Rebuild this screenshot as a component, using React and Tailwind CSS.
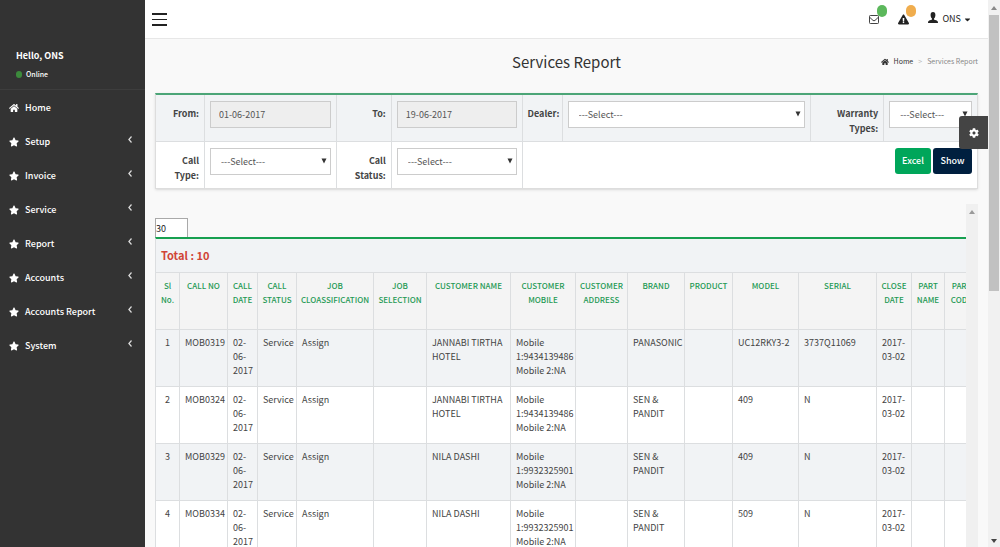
import React from "react";
import { FaHome, FaStar, FaCog, FaExclamationTriangle, FaCaretDown } from "react-icons/fa";

const MENU = ["Setup", "Invoice", "Service", "Report", "Accounts", "Accounts Report", "System"];

const COLUMNS = [
  { label: "Sl No.", width: "w-[24px]" },
  { label: "CALL NO", width: "w-[48px]" },
  { label: "CALL DATE", width: "w-[30px]" },
  { label: "CALL STATUS", width: "w-[39px]" },
  { label: "JOB CLOASSIFICATION", width: "w-[77px]" },
  { label: "JOB SELECTION", width: "w-[53px]" },
  { label: "CUSTOMER NAME", width: "w-[84px]" },
  { label: "CUSTOMER MOBILE", width: "w-[65px]" },
  { label: "CUSTOMER ADDRESS", width: "w-[52px]" },
  { label: "BRAND", width: "w-[57px]" },
  { label: "PRODUCT", width: "w-[48px]" },
  { label: "MODEL", width: "w-[66px]" },
  { label: "SERIAL", width: "w-[78px]" },
  { label: "CLOSE DATE", width: "w-[35px]" },
  { label: "PART NAME", width: "w-[33px]" },
  { label: "PART CODE", width: "w-[34px]" },
];

const ROWS = [
  { no: "MOB0319", name: "JANNABI TIRTHA HOTEL", mobile: "9434139486", brand: "PANASONIC", model: "UC12RKY3-2", serial: "3737Q11069" },
  { no: "MOB0324", name: "JANNABI TIRTHA HOTEL", mobile: "9434139486", brand: "SEN & PANDIT", model: "409", serial: "N" },
  { no: "MOB0329", name: "NILA DASHI", mobile: "9932325901", brand: "SEN & PANDIT", model: "409", serial: "N" },
  { no: "MOB0334", name: "NILA DASHI", mobile: "9932325901", brand: "SEN & PANDIT", model: "509", serial: "N" },
];

function Sidebar() {
  return (
    <aside className="w-[145px] shrink-0 bg-[#333333] text-white">
      <div className="h-[90px] border-b border-[#3d3d3d] pl-4 pt-[48px]">
        <p className="text-[9px] font-bold leading-4">Hello, ONS</p>
        <p className="mt-[2px] flex items-center gap-1 text-[7px] font-medium leading-4">
          <span className="h-[7px] w-[6px] rounded-full bg-[#3c8a3c]" />
          Online
        </p>
      </div>
      <nav className="pt-px">
        <a href="#home" className="flex h-[34px] items-center gap-[6px] pl-[9px] text-[9px] font-medium">
          <FaHome className="size-[10px]" />
          Home
        </a>
        {MENU.map((item) => (
          <a key={item} href="#menu" className="flex h-[34px] items-center gap-[6px] pl-[9px] pr-[13px] text-[9px] font-medium">
            <FaStar className="size-[10px]" />
            <span className="flex-1">{item}</span>
            <svg viewBox="0 0 4 7" className="mb-[5px] h-[7px] w-[4px]" fill="none" stroke="#ddd" strokeWidth="1.2">
              <path d="M3.500 0.500L0.900 3.500l2.600 3" />
            </svg>
          </a>
        ))}
      </nav>
    </aside>
  );
}

function Header() {
  return (
    <header className="flex h-[39px] shrink-0 items-center justify-between border-b border-[#e7e7e7] bg-white pl-[7px] pr-[16px]">
      <button type="button" aria-label="Toggle menu" className="flex w-[15px] flex-col gap-[4px]">
        <span className="h-[2px] bg-[#222]" />
        <span className="h-px bg-[#222]" />
        <span className="h-[2px] bg-[#222]" />
      </button>
      <div className="flex items-center text-[#222]">
        <button type="button" aria-label="Messages" className="relative mr-[19px]">
          <svg viewBox="0 0 10 9" className="h-[9px] w-[10px]" fill="none" stroke="#444" strokeWidth="1">
            <rect x="0.5" y="0.5" width="9" height="8" rx="0.8" />
            <path d="M0.8 2.4 L4 5.4 Q5 6.2 6 5.4 L9.2 2.4" />
          </svg>
          <span className="absolute -top-[10px] left-[8px] h-[12px] w-[10px] rounded-full bg-[#5cb85c]" />
        </button>
        <button type="button" aria-label="Alerts" className="relative mr-[19px]">
          <FaExclamationTriangle className="size-[11px]" />
          <span className="absolute -top-[9px] left-[8px] h-[12px] w-[10px] rounded-full bg-[#f0ad4e]" />
        </button>
        <button type="button" className="flex items-center gap-1 text-[9px]">
          <svg viewBox="0 0 10 11" className="mb-1 h-[11px] w-[10px]" fill="#222">
            <path d="M5 0C3.300 0 2.600 1.300 2.600 3c0 1.400.5 2.900 1.400 3.600v.9C3 8.100.3 8.500.1 9.700L0 11h10l-.1-1.300C9.700 8.500 7 8.100 6 7.500v-.9C6.900 5.900 7.400 4.400 7.400 3 7.400 1.300 6.700 0 5 0z" />
          </svg>
          <span>ONS</span>
          <FaCaretDown className="-ml-[2px] size-[9px]" />
        </button>
      </div>
    </header>
  );
}

function Cell({ children, className = "" }) {
  return <div className={"border-r border-[#dcdee0] px-[5px] pt-[6px] " + className}>{children}</div>;
}

function Label({ htmlFor, children }) {
  return (
    <Cell className="text-right">
      <label htmlFor={htmlFor} className="block pt-[5px] text-[9px] font-bold leading-[15px] text-[#444]">
        {children}
      </label>
    </Cell>
  );
}

function DateField({ id, value }) {
  return (
    <Cell>
      <input id={id} readOnly defaultValue={value} className="block h-[27px] w-full border border-[#cccccc] bg-[#eeeeee] px-2 text-[9px] text-[#555] outline-none" />
    </Cell>
  );
}

function SelectField({ id, last = false }) {
  return (
    <Cell className={last ? "border-r-0" : ""}>
      <div className="relative">
        <select id={id} className="block h-[27px] w-full appearance-none rounded-none border border-[#cccccc] bg-white px-[10px] text-[9px] text-[#555] outline-none">
          <option>---Select---</option>
        </select>
        <svg viewBox="0 0 6 6" className="pointer-events-none absolute right-[4px] top-[10px] size-[6px]" fill="#333">
          <path d="M0.500 0.500h5L3 5.500z" />
        </svg>
      </div>
    </Cell>
  );
}

const GRID = "grid grid-cols-[49px_132fr_55px_131fr_40px_249fr_73px_93fr]";

function Filters() {
  return (
    <form className="border-x border-b border-t-2 border-[#dddddd] border-t-[#4ba577] bg-white shadow-sm" onSubmit={(e) => e.preventDefault()}>
      <div className={GRID + " h-[47px] border-b border-[#dcdee0] bg-[#f1f3f5]"}>
        <Label htmlFor="from">From:</Label>
        <DateField id="from" value="01-06-2017" />
        <Label htmlFor="to">To:</Label>
        <DateField id="to" value="19-06-2017" />
        <Label htmlFor="dealer">Dealer:</Label>
        <SelectField id="dealer" />
        <Label htmlFor="warranty">Warranty Types:</Label>
        <SelectField id="warranty" last />
      </div>
      <div className={GRID + " h-[46px]"}>
        <Label htmlFor="type">Call Type:</Label>
        <SelectField id="type" />
        <Label htmlFor="status">Call Status:</Label>
        <SelectField id="status" />
        <div className="col-span-4 flex items-start justify-end gap-[2px] px-[5px] pt-[6px]">
          <button type="button" className="h-[26px] w-[36px] rounded-[3px] bg-[#00a65a] text-[9px] font-medium text-white">Excel</button>
          <button type="submit" className="h-[26px] w-[39px] rounded-[3px] bg-[#001f3f] text-[9px] font-medium text-white">Show</button>
        </div>
      </div>
    </form>
  );
}

function Report() {
  const cell = "border-r border-b border-[#dcdee0] px-[5px] pt-[6px] pb-[5px] align-top text-left";
  return (
    <section className="mt-[15px] flex min-h-0 flex-1">
      <div className="min-w-0 flex-1 overflow-hidden pt-[14px]">
        <input aria-label="Rows per page" defaultValue="30" className="block h-[19px] w-[33px] border border-b-0 border-[#a9a9a9] bg-white text-[9px] text-[#222] outline-none" />
        <div className="h-[35px] border-l border-t-2 border-[#dcdee0] border-t-[#17a050] bg-[#f1f3f5] pl-[5px] text-[11px] font-bold leading-[33px] text-[#d04437]">
          Total : 10
        </div>
        <table className="w-[823px] table-fixed border-separate border-spacing-0 border-l border-t border-[#dcdee0] text-[9px] leading-[14px] text-[#444]">
          <thead>
            <tr className="h-[57px] bg-[#f4f4f4] text-[8px] text-[#1f9a55]">
              {COLUMNS.map((c) => (
                <th key={c.label} className={"border-r border-b border-[#dcdee0] px-[3px] pt-[6px] align-top font-medium " + c.width}>{c.label}</th>
              ))}
            </tr>
          </thead>
          <tbody>
            {ROWS.map((r, i) => (
              <tr key={r.no} className="h-[57px] odd:bg-[#f1f3f5] even:bg-white">
                <td className="border-r border-b border-[#dcdee0] pt-[6px] text-center align-top">{i + 1}</td>
                <td className={cell}>{r.no}</td>
                <td className={cell}>02-<br />06-<br />2017</td>
                <td className={cell}>Service</td>
                <td className={cell}>Assign</td>
                <td className={cell} />
                <td className={cell}>{r.name}</td>
                <td className={cell}>Mobile<br />1:{r.mobile}<br />Mobile 2:NA</td>
                <td className={cell} />
                <td className={cell}>{r.brand}</td>
                <td className={cell} />
                <td className={cell}>{r.model}</td>
                <td className={cell}>{r.serial}</td>
                <td className={cell}>2017-<br />03-02</td>
                <td className={cell} />
                <td className={cell} />
              </tr>
            ))}
          </tbody>
        </table>
      </div>
      <div className="flex w-[12px] shrink-0 justify-center bg-[#f0f0f0] pt-[6px]">
        <svg viewBox="0 0 6 4" className="h-[4px] w-[6px]" fill="#999"><path d="M0 4L3 0l3 4z" /></svg>
      </div>
    </section>
  );
}

export default function App() {
  return (
    <div className="relative flex h-screen overflow-hidden bg-[#f9f9f9] font-['Noto_Sans_CJK_SC',sans-serif]">
      <Sidebar />
      <div className="flex min-w-0 flex-1 flex-col">
        <Header />
        <main className="flex min-h-0 flex-1 flex-col pl-[10px] pr-[10px]">
          <div className="grid h-[54px] shrink-0 grid-cols-[1fr_auto_1fr] items-center pb-[9px]">
            <h1 className="col-start-2 text-[15px] leading-6 text-[#333]">Services Report</h1>
            <nav aria-label="Breadcrumb" className="flex items-center justify-end gap-[5px] text-[7px] text-[#888]">
              <a href="#home" className="flex items-center gap-[5px] text-[#333]">
                <FaHome className="size-[8px]" />
                Home
              </a>
              <span className="text-[#bbb]">&gt;</span>
              <span>Services Report</span>
            </nav>
          </div>
          <Filters />
          <Report />
        </main>
      </div>
      <div className="flex w-[12px] shrink-0 flex-col items-center justify-between bg-[#f1f1f1] pb-[4px] pt-[6px]">
        <svg viewBox="0 0 6 4" className="h-[4px] w-[6px]" fill="#888"><path d="M0 4L3 0l3 4z" /></svg>
        <div className="mt-[5px] h-[276px] w-[10px] bg-[#c1c1c1]" />
        <div className="flex-1" />
        <svg viewBox="0 0 6 4" className="h-[4px] w-[6px]" fill="#444"><path d="M0 0h6L3 4z" /></svg>
      </div>
      <button type="button" aria-label="Settings" className="absolute right-[12px] top-[116px] flex h-[33px] w-[29px] items-center justify-center rounded-l-[3px] bg-[#444444] text-white">
        <FaCog className="size-[10px]" />
      </button>
    </div>
  );
}
